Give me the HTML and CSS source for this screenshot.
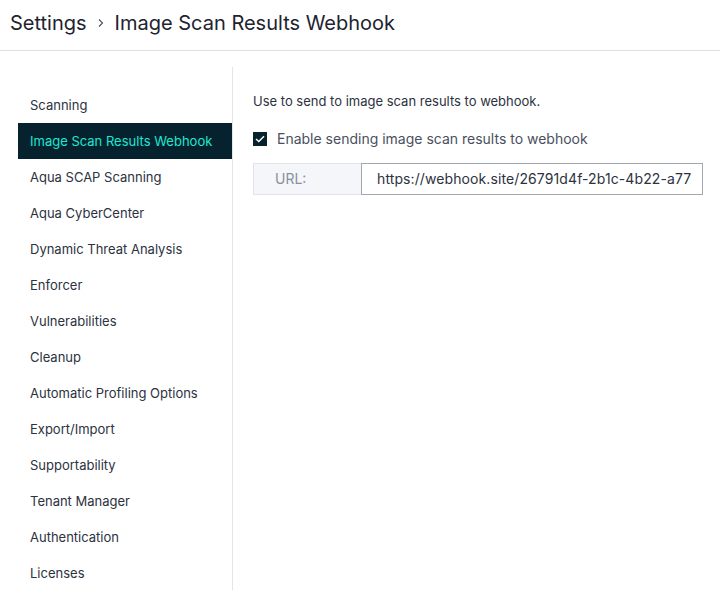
FILE: index.html
```html
<!DOCTYPE html>
<html>
<head>
<meta charset="utf-8">
<link rel="stylesheet" href="styles.css">
</head>
<body>
<header class="topbar">
  <span class="crumb">Settings</span>
  <svg class="chev" width="8" height="10" viewBox="0 0 8 10"><path d="M2 1.5 L5.5 5 L2 8.5" fill="none" stroke="#4a5060" stroke-width="1.1"/></svg>
  <span class="crumb">Image Scan Results Webhook</span>
</header>
<div class="main">
  <nav class="sidebar">
    <a class="item">Scanning</a>
    <a class="item active">Image Scan Results Webhook</a>
    <a class="item">Aqua SCAP Scanning</a>
    <a class="item">Aqua CyberCenter</a>
    <a class="item">Dynamic Threat Analysis</a>
    <a class="item">Enforcer</a>
    <a class="item">Vulnerabilities</a>
    <a class="item">Cleanup</a>
    <a class="item">Automatic Profiling Options</a>
    <a class="item">Export/Import</a>
    <a class="item">Supportability</a>
    <a class="item">Tenant Manager</a>
    <a class="item">Authentication</a>
    <a class="item">Licenses</a>
  </nav>
  <section class="content">
    <p class="desc">Use to send to image scan results to webhook.</p>
    <label class="check">
      <span class="box"><svg width="10" height="8" viewBox="0 0 10 8"><path d="M1 4 L3.8 6.6 L9 1.2" fill="none" stroke="#ffffff" stroke-width="1.4"/></svg></span>
      <span>Enable sending image scan results to webhook</span>
    </label>
    <div class="field">
      <span class="field-label">URL:</span>
      <span class="field-input">https://webhook.site/26791d4f-2b1c-4b22-a77</span>
    </div>
  </section>
</div>
</body>
</html>
```
FILE: styles.css
```css
html, body { margin: 0; padding: 0; background: #fff; }
body { font-family: Inter, "Noto Sans", sans-serif; color: #2c3240; width: 720px; height: 590px; overflow: hidden; }
.topbar { display: flex; align-items: center; padding-left: 10px; box-sizing: border-box; height: 51px; padding-bottom: 4px; border-bottom: 1px solid #dcdfe3; }
.crumb { font-size: 20px; color: #1e2330; }
.chev { margin: 0 10px; }
.main { display: flex; padding-top: 16px; }
.sidebar { width: 214px; margin-left: 18px; border-right: 1px solid #e2e4e8; padding-top: 20px; display: flex; flex-direction: column; height: 503px; }
.item { display: block; height: 36px; line-height: 36px; padding-left: 12px; font-size: 13px; color: #2c3240; }
.item.active { background: #06222e; color: #1ce8d2; }
.content { padding-left: 20px; padding-top: 24px; flex: 1; }
.desc { margin: 0; font-size: 13px; line-height: 20px; color: #2c3240; }
.check { display: flex; align-items: center; margin-top: 19px; font-size: 14px; color: #4a5060; }
.box { width: 14px; height: 14px; background: #08222d; display: flex; align-items: center; justify-content: center; margin-right: 10px; }
.field { display: flex; margin-top: 16px; width: 450px; height: 32px; }
.field-label { width: 108px; box-sizing: border-box; background: #f4f6fa; border: 1px solid #e1e4ea; border-right: none; font-size: 14px; color: #8a909c; padding-left: 21px; line-height: 30px; }
.field-input { flex: 1; box-sizing: border-box; border: 1px solid #a3a8b0; font-size: 14px; letter-spacing: 0.1px; color: #2c3240; padding-left: 15px; line-height: 30px; white-space: nowrap; overflow: hidden; }
```
